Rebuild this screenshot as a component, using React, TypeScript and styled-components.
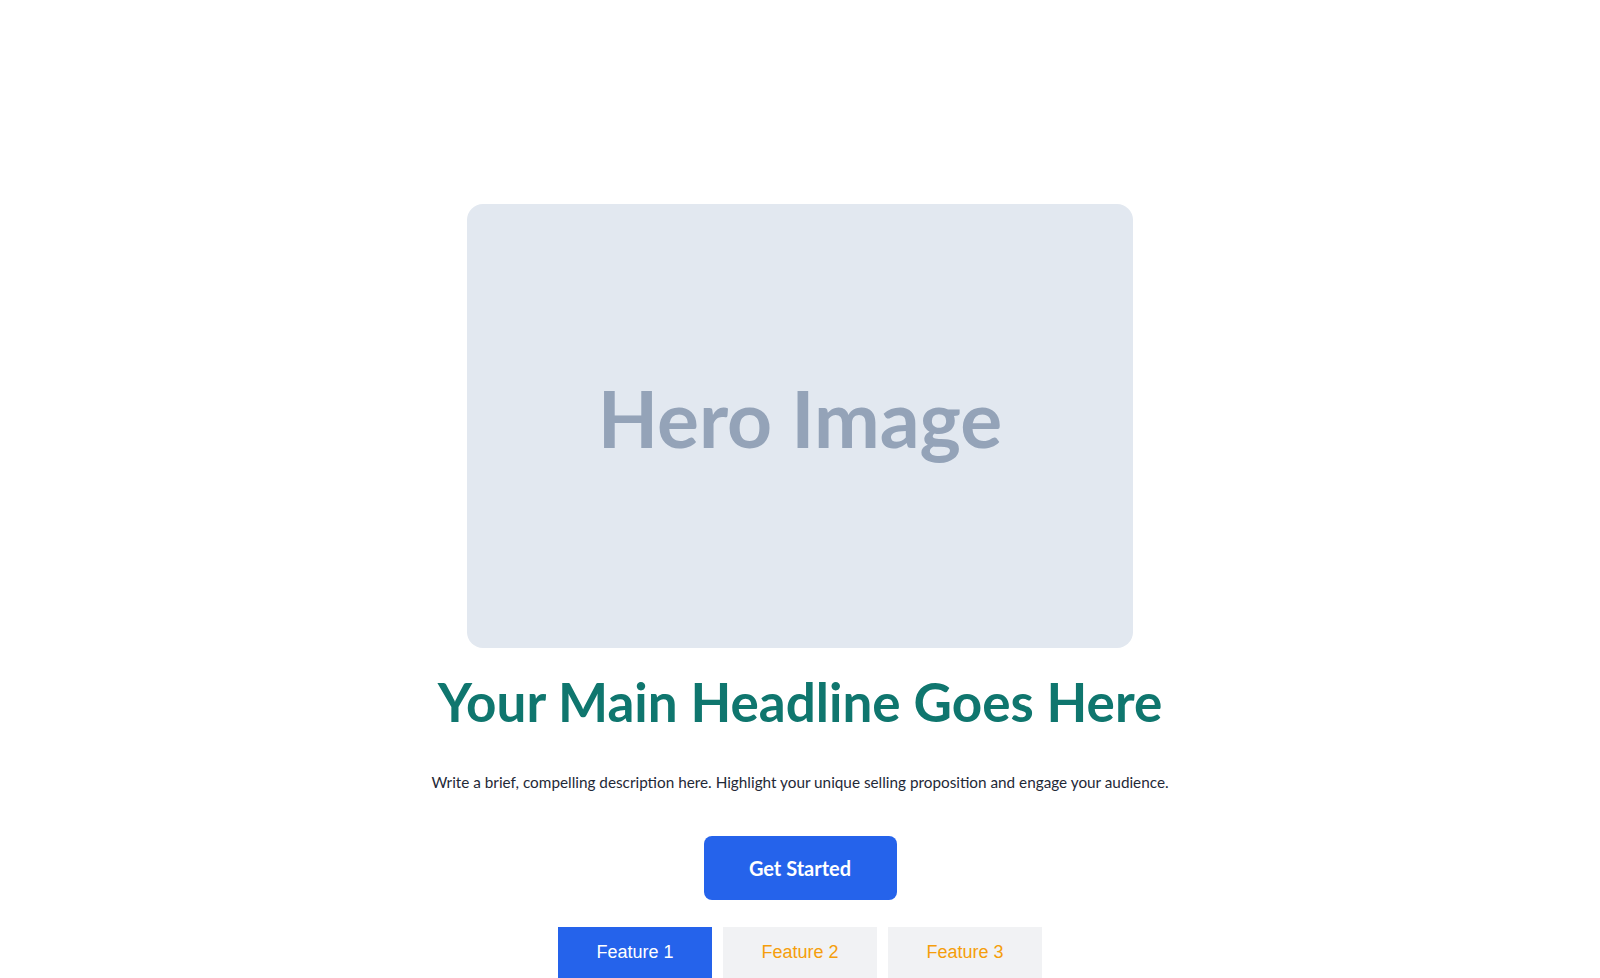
import React, { useState } from "react";
import styled, { createGlobalStyle } from "styled-components";

const GlobalStyle = createGlobalStyle`
  html, body {
    margin: 0;
    padding: 0;
    background: #ffffff;
  }
  body {
    font-family: "Lato", "Noto Sans", sans-serif;
    color: #1f2937;
  }
  * { box-sizing: border-box; }
`;

const Page = styled.main`
  display: flex;
  flex-direction: column;
  align-items: center;
  padding-top: 204px;
`;

const HeroFrame = styled.div`
  width: 666px;
  height: 444px;
  border-radius: 16px;
  background: #e2e8f0;
  display: flex;
  align-items: center;
  justify-content: center;
`;

const HeroLabel = styled.span`
  font-family: "Lato", sans-serif;
  font-weight: 700;
  font-size: 78.5px;
  color: #94a3b8;
  line-height: 1;
  margin-top: -15px;
`;

const Headline = styled.h1`
  margin: 22px 0 0;
  font-family: "Lato", sans-serif;
  font-weight: 700;
  font-size: 53px;
  line-height: 1.2;
  color: #0f766e;
  text-align: center;
`;

const Description = styled.p`
  margin: 36px 0 0;
  font-family: "Lato", sans-serif;
  font-size: 15.3px;
  line-height: 24px;
  color: #1f2937;
  text-align: center;
`;

const CtaButton = styled.button`
  margin-top: 42px;
  width: 193px;
  height: 64px;
  border: none;
  border-radius: 8px;
  background: #2563eb;
  color: #ffffff;
  font-family: "Lato", sans-serif;
  font-weight: 700;
  font-size: 20px;
  cursor: pointer;
`;

const TabRow = styled.div`
  display: flex;
  gap: 11px;
  margin-top: 27px;
`;

const Tab = styled.button<{ $active: boolean }>`
  width: 154px;
  padding: 15px 0;
  border: none;
  border-radius: 0;
  background: ${(p) => (p.$active ? "#2563eb" : "#f1f2f4")};
  color: ${(p) => (p.$active ? "#ffffff" : "#f59e0b")};
  font-family: "Liberation Sans", Arial, sans-serif;
  font-size: 18px;
  line-height: 21px;
  cursor: pointer;
`;

const features = ["Feature 1", "Feature 2", "Feature 3"];

export default function App() {
  const [active, setActive] = useState(0);
  return (
    <>
      <GlobalStyle />
      <Page>
        <HeroFrame>
          <HeroLabel>Hero Image</HeroLabel>
        </HeroFrame>
        <Headline>Your Main Headline Goes Here</Headline>
        <Description>
          Write a brief, compelling description here. Highlight your unique selling proposition and engage your audience.
        </Description>
        <CtaButton>Get Started</CtaButton>
        <TabRow>
          {features.map((f, i) => (
            <Tab key={f} $active={i === active} onClick={() => setActive(i)}>
              {f}
            </Tab>
          ))}
        </TabRow>
      </Page>
    </>
  );
}
